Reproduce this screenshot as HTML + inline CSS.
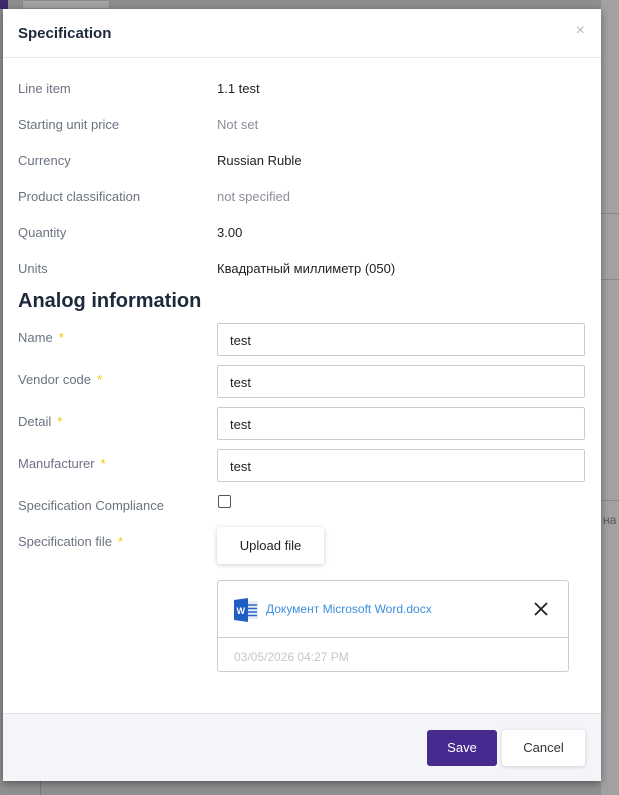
<!DOCTYPE html>
<html><head><meta charset="utf-8"><style>
*{box-sizing:border-box;margin:0;padding:0}
body{width:619px;height:795px;overflow:hidden;background:#8f8f8f;font-family:"Liberation Sans","Noto Sans CJK SC",sans-serif;position:relative}
.bg1{position:absolute;left:22px;top:0;width:88px;height:9px;background:#a4a4a4;border:1px solid #8a8a8a}
.bg2{position:absolute;left:0;top:0;width:8px;height:9px;background:#3b2a6e}
.bgr{position:absolute;left:601px;top:0;width:18px;height:795px;background:#a2a2a2}
.modal{position:absolute;left:3px;top:9px;width:598px;height:772px;background:#fff;box-shadow:0 2px 8px rgba(0,0,0,.4)}
.hdr{height:49px;border-bottom:1px solid #e6e6e6;position:relative}
.hdr h1{position:absolute;left:15px;top:16px;font-size:15px;font-weight:bold;color:#1e2a3b}
.x{position:absolute;right:16px;top:13px;color:#bbb;font-size:16px}
.row{position:absolute;left:15px;font-size:13px;color:#6b7280}
.val{position:absolute;left:214px;font-size:13px;color:#222}
.muted{color:#8a8f99}
h2{position:absolute;left:15px;top:281px;font-size:20px;font-weight:bold;color:#1e2a3b}
.inp{position:absolute;left:214px;width:368px;height:33px;border:1px solid #ccc;border-radius:2px;font-size:13px;color:#222;padding:9px 12px}
.st{color:#f5c400;margin-left:6px}
.cb{position:absolute;left:215px;top:486px;width:13px;height:13px;border:1px solid #555;border-radius:2px}
.up{position:absolute;left:214px;top:518px;width:107px;height:37px;border-radius:3px;box-shadow:0 1px 5px rgba(0,0,0,.2);font-size:13px;color:#222;text-align:center;line-height:37px}
.card{position:absolute;left:214px;top:571px;width:352px;height:92px;border:1px solid #ccccd6;border-radius:3px}
.card .top{height:57px;border-bottom:1px solid #ccccd6;position:relative}
.fn{position:absolute;left:48px;top:21px;font-size:12px;color:#3d8fe0}
.dt{position:absolute;left:16px;font-size:12px;color:#c4c6cc}
.ftr{position:absolute;left:0;top:704px;width:598px;height:68px;background:#f4f5f9;border-top:1px solid #e3e3e3}
.save{position:absolute;left:424px;top:16px;width:70px;height:36px;background:#472a90;border-radius:3px;color:#fff;font-size:13px;text-align:center;line-height:36px}
.cancel{position:absolute;left:499px;top:16px;width:83px;height:36px;background:#fff;border-radius:3px;color:#333;font-size:13px;text-align:center;line-height:36px;box-shadow:0 1px 4px rgba(0,0,0,.15)}
</style></head><body>
<div class="bg2"></div><div class="bg1"></div><div class="bgr"></div>
<div style="position:absolute;left:601px;top:213px;width:18px;height:1px;background:#888"></div>
<div style="position:absolute;left:601px;top:279px;width:18px;height:1px;background:#888"></div>
<div style="position:absolute;left:601px;top:500px;width:18px;height:1px;background:#888"></div>
<div style="position:absolute;left:603px;top:513px;font-size:12px;color:#555">на</div>
<div style="position:absolute;left:40px;top:781px;width:1px;height:14px;background:#777"></div>
<div class="modal">
 <div class="hdr"><h1>Specification</h1><span class="x">×</span></div>
 <div class="row" style="top:72px">Line item</div><div class="val" style="top:72px">1.1 test</div>
 <div class="row" style="top:108px">Starting unit price</div><div class="val muted" style="top:108px">Not set</div>
 <div class="row" style="top:144px">Currency</div><div class="val" style="top:144px">Russian Ruble</div>
 <div class="row" style="top:180px">Product classification</div><div class="val muted" style="top:180px">not specified</div>
 <div class="row" style="top:216px">Quantity</div><div class="val" style="top:216px">3.00</div>
 <div class="row" style="top:252px">Units</div><div class="val" style="top:252px">Квадратный миллиметр (050)</div>
 <h2>Analog information</h2>
 <div class="row" style="top:321px">Name<span class="st">*</span></div><div class="inp" style="top:314px">test</div>
 <div class="row" style="top:363px">Vendor code<span class="st">*</span></div><div class="inp" style="top:356px">test</div>
 <div class="row" style="top:405px">Detail<span class="st">*</span></div><div class="inp" style="top:398px">test</div>
 <div class="row" style="top:447px">Manufacturer<span class="st">*</span></div><div class="inp" style="top:440px">test</div>
 <div class="row" style="top:489px">Specification Compliance</div><div class="cb"></div>
 <div class="row" style="top:525px">Specification file<span class="st">*</span></div>
 <div class="up">Upload file</div>
 <div class="card"><div class="top">
  <svg style="position:absolute;left:16px;top:17px" width="25" height="24" viewBox="0 0 25 24"><rect x="8" y="3" width="16" height="18" fill="#e8eef8"/><g stroke="#2b66c8" stroke-width="1.5"><line x1="14" y1="7" x2="23" y2="7"/><line x1="14" y1="10.5" x2="23" y2="10.5"/><line x1="14" y1="14" x2="23" y2="14"/><line x1="14" y1="17.5" x2="23" y2="17.5"/></g><path d="M0 2 L14 0 V24 L0 22Z" fill="#1f5fc4"/><text x="2.5" y="16" font-size="9" font-weight="bold" fill="#fff" font-family="Liberation Sans">W</text></svg>
  <div class="fn">Документ Microsoft Word.docx</div>
  <svg style="position:absolute;left:316px;top:21px" width="14" height="14" viewBox="0 0 14 14"><path d="M1 1L13 13M13 1L1 13" stroke="#222" stroke-width="1.8"/></svg>
 </div><div class="dt" style="top:69px">03/05/2026 04:27 PM</div></div>
 <div class="ftr"><div class="save">Save</div><div class="cancel">Cancel</div></div>
</div>
</body></html>
